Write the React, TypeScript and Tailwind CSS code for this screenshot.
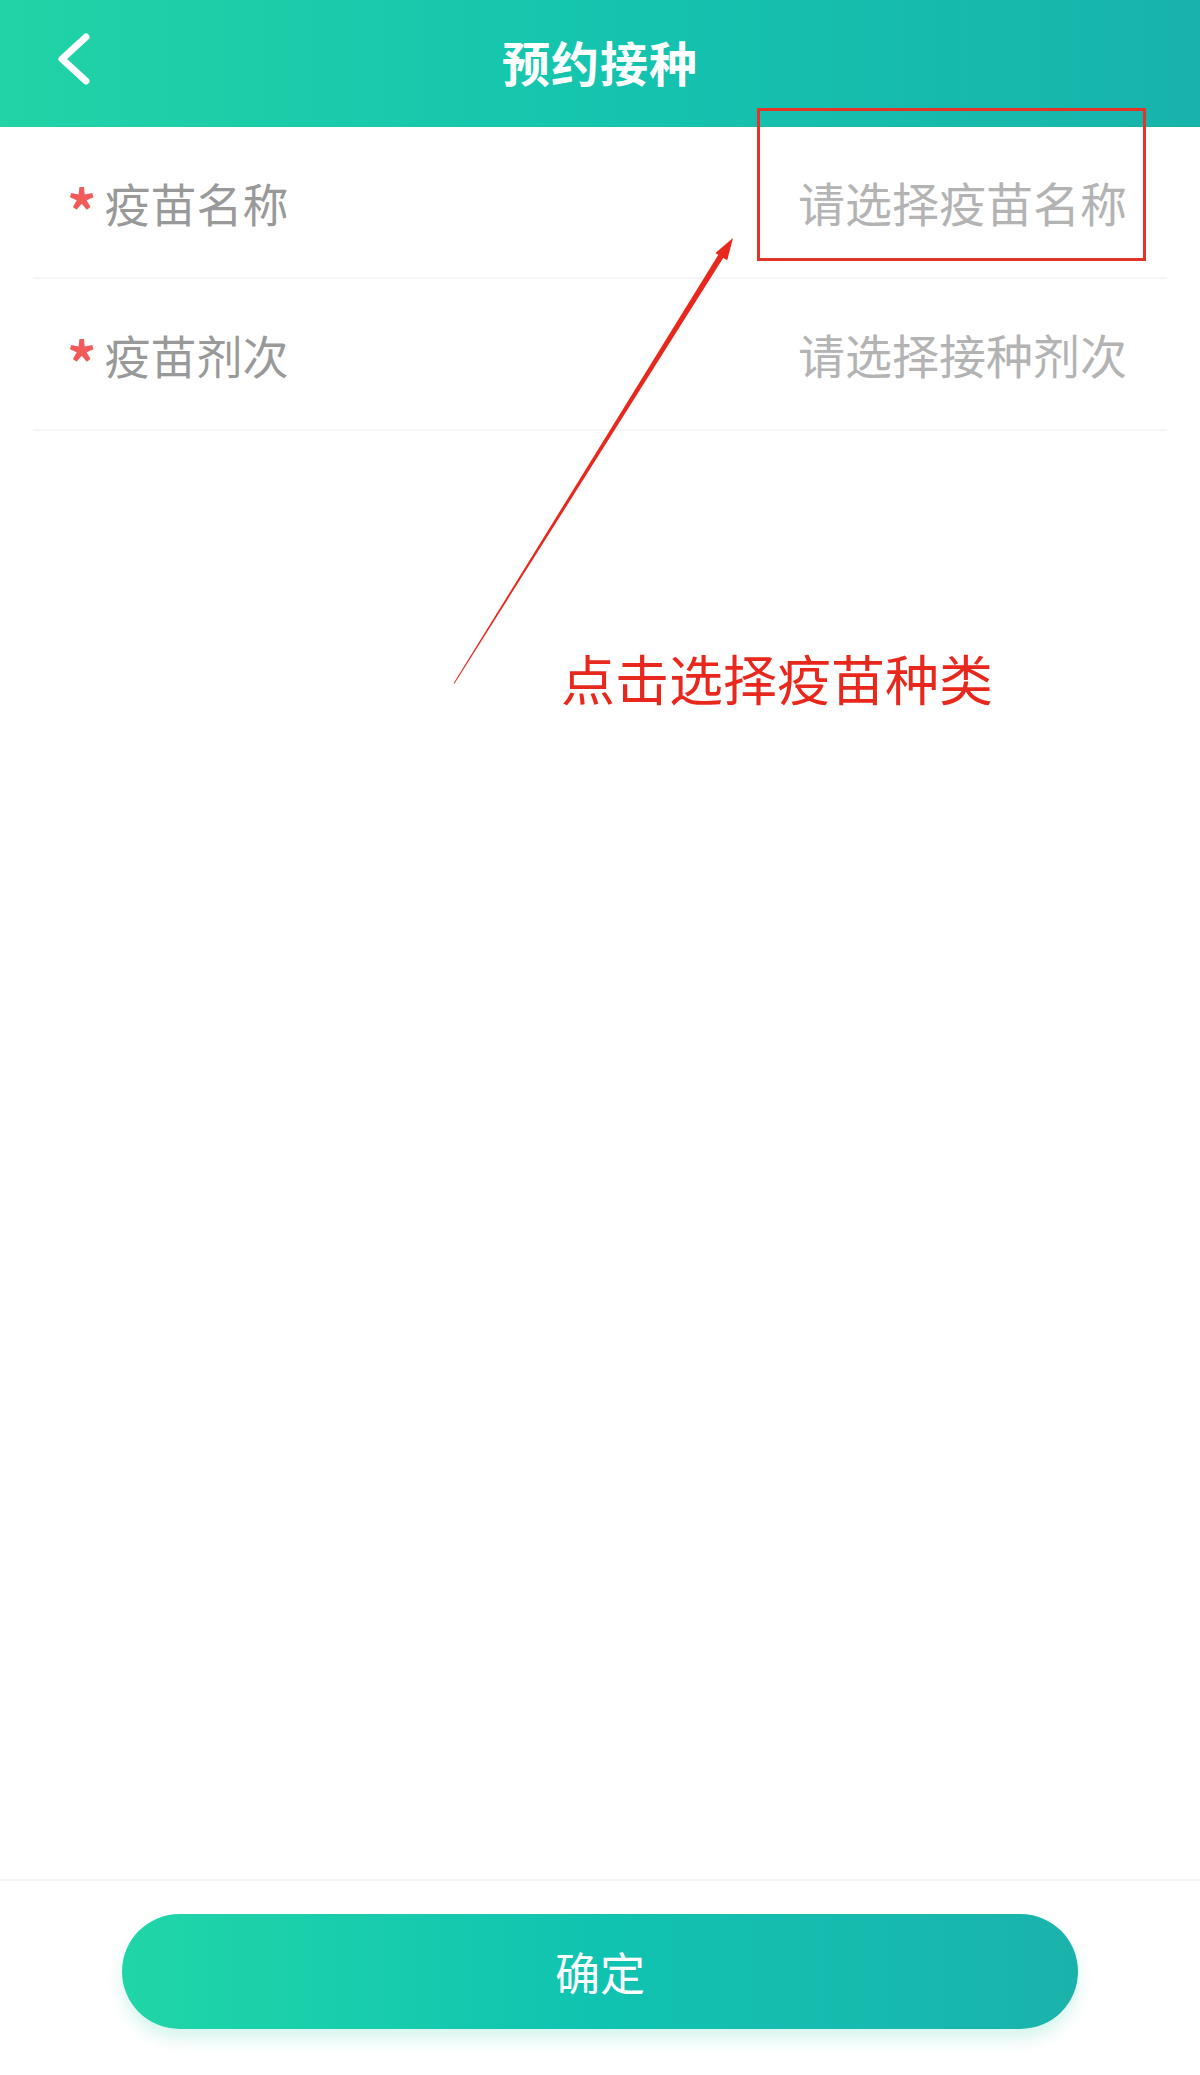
const font = { fontFamily: '"Noto Sans CJK SC", "Noto Sans", sans-serif' };

function FormRow({ label, placeholder }: { label: string; placeholder: string }) {
  return (
    <div className="mx-[33px] h-[152px] flex items-center justify-between border-b-2 border-[#f4f5f6] pl-[34px] pr-[40px]">
      <div className="flex items-center">
        <span className="text-[58px] font-bold text-[#f15b5b] leading-none mt-[14px] mr-[8px]">*</span>
        <span className="text-[46px] text-[#999999]">{label}</span>
      </div>
      <span className="text-[47px] text-[#b3b3b3]">{placeholder}</span>
    </div>
  );
}

export default function App() {
  return (
    <div className="relative w-[1200px] h-[2075px] bg-white flex flex-col overflow-hidden" style={font}>
      <div className="h-[127px] shrink-0 flex items-center justify-center relative bg-gradient-to-r from-[#21d3a6] via-[#14c4ae] to-[#18b3ac]">
        <svg className="absolute left-[52px] top-[32px]" width="44" height="54" viewBox="0 0 44 54">
          <path d="M34 5 L10 27 L34 49" fill="none" stroke="#ffffff" strokeWidth="7" strokeLinecap="round" strokeLinejoin="round" />
        </svg>
        <h1 className="text-[48px] font-bold text-white tracking-[1px] -mt-[6px]">预约接种</h1>
      </div>

      <FormRow label="疫苗名称" placeholder="请选择疫苗名称" />
      <FormRow label="疫苗剂次" placeholder="请选择接种剂次" />

      <div className="flex-1">
        <p className="mt-[220px] pl-[561px] text-[54px] text-[#e8271d] leading-none">点击选择疫苗种类</p>
      </div>

      <div className="h-[196px] shrink-0 border-t-2 border-[#f6f6f6] px-[122px] pt-[33px]">
        <button className="w-full h-[115px] rounded-full bg-gradient-to-r from-[#20d6a7] via-[#10c3b1] to-[#1ab3ac] text-white text-[45px] shadow-[0_10px_16px_rgba(30,200,160,0.18)]">
          确定
        </button>
      </div>

      {/* annotation overlay */}
      <div className="absolute left-[757px] top-[108px] w-[389px] h-[153px] border-[3px] border-[#e3342a] pointer-events-none" />
      <svg className="absolute left-0 top-0 pointer-events-none" width="1200" height="2075" viewBox="0 0 1200 2075">
        <polygon points="453.6,683.3 454.4,683.7 723.5,257.6 718.5,254.4" fill="#e8271d" />
        <polygon points="733,238 727.2,260.3 715.4,252.9" fill="#e8271d" />
      </svg>
    </div>
  );
}
